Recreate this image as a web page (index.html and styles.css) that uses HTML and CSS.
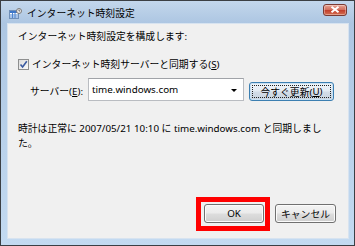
FILE: index.html
```html
<!DOCTYPE html>
<html lang="ja">
<head>
<meta charset="utf-8">
<link rel="stylesheet" href="styles.css">
</head>
<body>
<div class="window">
  <div class="titlebar">
    <svg class="app-icon" width="13" height="11" viewBox="0 0 13 11">
      <rect x="0.5" y="2.5" width="9" height="8" fill="#fff" stroke="#6f8fb8"/>
      <rect x="1" y="3" width="8" height="2" fill="#3d77c9"/>
      <path d="M1 7h8M1 9h8M3.5 5v5M6 5v5" stroke="#4f86d0" stroke-width="1"/>
      <circle cx="10" cy="3" r="2.5" fill="#e8e8e8" stroke="#7a7a7a"/>
      <path d="M10 1.6V3h1" stroke="#555" stroke-width="0.8" fill="none"/>
    </svg>
    <span class="title">インターネット時刻設定</span>
    <span class="close">
      <svg width="10" height="7" viewBox="0 0 10 7"><path d="M1.5 0.8L8.5 6.2M8.5 0.8L1.5 6.2" stroke="#fff" stroke-width="2"/></svg>
    </span>
  </div>
  <div class="client">
    <p class="intro">インターネット時刻設定を構成します:</p>
    <label class="check-row">
      <span class="checkbox"><svg width="9" height="9" viewBox="0 0 9 9"><path d="M1.5 4.5L3.6 7L7.8 1.2" stroke="#3a5aa0" stroke-width="1.6" fill="none"/></svg></span>
      <span>インターネット時刻サーバーと同期する(<u>S</u>)</span>
    </label>
    <div class="server-row">
      <span class="server-label">サーバー(<u>E</u>):</span>
      <div class="combo"><span class="combo-text">time.windows.com</span><span class="arrow"></span></div>
      <button class="btn btn-update"><span class="focus-ring">今すぐ更新(<u>U</u>)</span></button>
    </div>
    <p class="status">時計は正常に 2007/05/21 10:10 に time.windows.com と同期しました。</p>
    <div class="actions">
      <button class="btn btn-ok">OK</button>
      <button class="btn btn-cancel">キャンセル</button>
    </div>
  </div>
</div>
</body>
</html>
```
FILE: styles.css
```css
* { box-sizing: border-box; }
html, body { margin: 0; padding: 0; }
body {
  font-family: "Noto Sans", "Noto Sans CJK JP", sans-serif;
  font-size: 9.8px;
  color: #000;
  background: #fff;
}
.window {
  width: 355px;
  height: 246px;
  border: 1px solid #3b3f44;
  background: linear-gradient(to bottom, #c3d7ec 0px, #adc6e2 22px, #bad2eb 60%, #c3daf1 100%);
  padding: 0 5px 6px 6px;
  display: flex;
  flex-direction: column;
}
.titlebar {
  height: 22px;
  display: flex;
  align-items: center;
}
.app-icon { margin-left: 2px; margin-top: 2px; }
.title {
  margin-left: 5px;
  margin-top: 2px;
  font-size: 9.8px;
  color: #000;
  flex: 1;
}
.close {
  width: 24px;
  height: 12px;
  margin-right: 2px;
  margin-top: -5px;
  border: 1px solid #7a3a33;
  border-radius: 3px;
  background: linear-gradient(to bottom, #e8a393 0%, #d3715f 45%, #c2412e 55%, #d46f52 100%);
  display: flex;
  align-items: center;
  justify-content: center;
  box-shadow: inset 0 0 0 1px rgba(255,255,255,0.35);
}
.client {
  flex: 1;
  background: #f0f0f0;
  border: 1px solid #d7e3f0;
  padding: 5px 12px 15px 10px;
  display: flex;
  flex-direction: column;
}
p { margin: 0; }
.intro { line-height: 15px; }
.check-row {
  margin-top: 13px;
  display: flex;
  align-items: center;
  line-height: 15px;
}
.checkbox {
  width: 11px;
  height: 11px;
  border: 1px solid #8e8f8f;
  background: linear-gradient(135deg, #dcdcdc, #fafafa);
  display: flex;
  align-items: center;
  justify-content: center;
  margin-right: 3px;
}
.server-row {
  margin-top: 6px;
  display: flex;
  align-items: center;
  height: 23px;
}
.server-label {
  margin-left: 12px;
  width: 58px;
  margin-top: 3px;
}
.combo {
  width: 156px;
  height: 23px;
  background: #fff;
  border: 1px solid #b9bcc1;
  border-top-color: #a0a3a8;
  display: flex;
  align-items: center;
  padding-left: 3px;
  padding-right: 6px;
}
.combo-text { flex: 1; }
.arrow {
  width: 0;
  height: 0;
  border-left: 3px solid transparent;
  border-right: 3px solid transparent;
  border-top: 3px solid #000;
  margin-top: 2px;
}
.btn {
  font-family: inherit;
  font-size: 9.8px;
  color: #000;
  border: 1px solid #707070;
  border-radius: 3px;
  background: linear-gradient(to bottom, #f3f3f3 0%, #ebebeb 48%, #dddddd 52%, #cfcfcf 100%);
  box-shadow: inset 0 0 0 1px #fbfbfb;
  padding: 0;
  height: 19px;
  display: flex;
  align-items: center;
  justify-content: center;
}
.btn-update {
  width: 85px;
  margin-left: 5px;
  margin-top: 4px;
  border-color: #3c7fb1;
  background: linear-gradient(to bottom, #eef4f9 0%, #e3ebf3 48%, #d3dde8 52%, #c7d3df 100%);
  box-shadow: inset 0 0 0 1px #c8e0f3;
  padding: 2px;
}
.focus-ring {
  border: 1px dotted #222;
  width: 100%;
  height: 100%;
  display: flex;
  align-items: center;
  justify-content: center;
}
.status {
  margin-top: 20px;
  width: 314px;
  line-height: 15px;
}
.actions {
  margin-top: auto;
  display: flex;
  justify-content: flex-end;
  gap: 11px;
}
.btn-ok {
  width: 60px;
  position: relative;
}
.btn-ok::after {
  content: "";
  position: absolute;
  top: -8px;
  left: -9px;
  right: -7px;
  bottom: -9px;
  border: 5px solid #ff0000;
}
.btn-cancel { width: 61px; }
u { text-decoration: underline; text-underline-offset: 1px; }
```
